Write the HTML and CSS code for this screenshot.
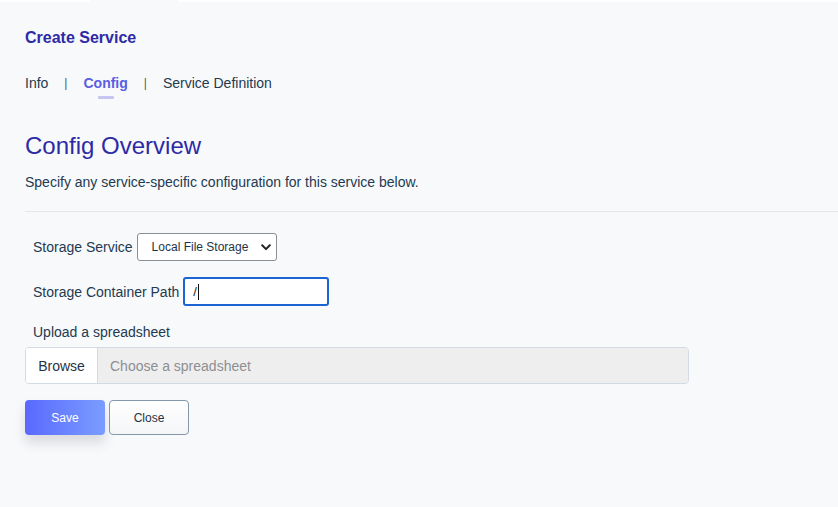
FILE: index.html
```html
<!DOCTYPE html>
<html>
<head>
<meta charset="utf-8">
<link rel="stylesheet" href="styles.css">
</head>
<body>
<div class="topstrip"><span class="ts-a"></span><span class="ts-gap"></span><span class="ts-b"></span></div>
<main class="page">
  <h1 class="title">Create Service</h1>
  <nav class="tabs">
    <span class="tab">Info</span>
    <span class="sep">|</span>
    <span class="tab active">Config<span class="bar"></span></span>
    <span class="sep">|</span>
    <span class="tab">Service Definition</span>
  </nav>
  <h2 class="heading">Config Overview</h2>
  <p class="desc">Specify any service-specific configuration for this service below.</p>
  <div class="rule"></div>
  <div class="row row-select">
    <label class="lbl">Storage Service</label>
    <div class="select">Local File Storage
      <svg class="chev" width="10" height="7" viewBox="0 0 10 7"><path d="M1.2 1.3 L5 5.1 L8.8 1.3" fill="none" stroke="#222" stroke-width="2" stroke-linecap="round" stroke-linejoin="round"/></svg>
    </div>
  </div>
  <div class="row row-input">
    <label class="lbl">Storage Container Path</label>
    <div class="textin"><span class="val">/</span><span class="caret"></span></div>
  </div>
  <div class="lbl upload">Upload a spreadsheet</div>
  <div class="filegroup">
    <span class="browse">Browse</span>
    <span class="fileph">Choose a spreadsheet</span>
  </div>
  <div class="actions">
    <button class="btn save">Save</button>
    <button class="btn close">Close</button>
  </div>
</main>
</body>
</html>
```
FILE: styles.css
```css
* { box-sizing: border-box; }
html, body { margin: 0; padding: 0; }
body {
  background: #f8f9fb;
  font-family: "Liberation Sans", Arial, sans-serif;
  color: #233a50;
  width: 838px;
  height: 507px;
  overflow: hidden;
}
.topstrip { display: flex; height: 2px; }
.ts-a { width: 90px; background: #fff; }
.ts-gap { width: 88px; }
.ts-b { flex: 1; background: #fff; }

.page { padding-left: 25px; }
.title {
  margin: 26px 0 0;
  font-size: 16px;
  line-height: 20px;
  font-weight: bold;
  color: #2d2aa6;
}
.tabs {
  display: flex;
  align-items: flex-start;
  gap: 16px;
  margin-top: 25px;
  font-size: 14px;
  line-height: 20px;
  height: 20px;
}
.tab { display: flex; flex-direction: column; align-items: center; }
.tab.active { color: #5a5ee4; font-weight: bold; }
.bar { width: 16px; height: 3px; background: #c5c6f2; margin-top: 3px; border-radius: 1px; }
.sep { color: #4a5a6a; font-size: 12px; }

.heading {
  margin: 39px 0 0;
  font-size: 24px;
  line-height: 28px;
  font-weight: normal;
  color: #2d2aa6;
}
.desc {
  margin: 12px 0 0;
  font-size: 14px;
  line-height: 20px;
}
.rule { margin-top: 19px; height: 1px; background: #e4e6ea; }

.row { display: flex; align-items: center; padding-left: 8px; gap: 4px; }
.row-select { margin-top: 21px; }
.row-input { margin-top: 16px; }
.lbl { font-size: 14px; line-height: 20px; }
.select {
  width: 140px;
  height: 28px;
  border: 1px solid #8a8f96;
  border-radius: 3px;
  background: #fff;
  font-size: 12px;
  color: #1f3346;
  display: flex;
  align-items: center;
  justify-content: space-between;
  padding: 0 5px 0 14px;
}
.chev { display: block; }
.textin {
  width: 146px;
  height: 29px;
  border: 2px solid #1a64d4;
  border-radius: 3px;
  background: #fff;
  display: flex;
  align-items: center;
  padding-left: 8px;
  font-size: 13px;
  color: #222;
}
.caret { width: 1px; height: 16px; background: #111; margin-left: 1px; }

.upload { margin-top: 16px; padding-left: 8px; }
.filegroup {
  margin-top: 5px;
  width: 664px;
  height: 37px;
  border: 1px solid #d3dae2;
  border-radius: 4px;
  display: flex;
  overflow: hidden;
  font-size: 14px;
}
.browse {
  width: 72px;
  background: #fff;
  border-right: 1px solid #d3dae2;
  display: flex;
  align-items: center;
  justify-content: center;
  color: #1f3346;
}
.fileph {
  flex: 1;
  background: #eeeeee;
  display: flex;
  align-items: center;
  padding-left: 12px;
  color: #8d8f92;
}

.actions { display: flex; gap: 4px; margin-top: 16px; }
.btn {
  width: 80px;
  height: 35px;
  font-family: "Liberation Sans", Arial, sans-serif;
  font-size: 12px;
  border-radius: 4px;
  cursor: pointer;
}
.save {
  border: none;
  color: #fff;
  background: linear-gradient(90deg, #5a69ff, #7a9dff);
  box-shadow: 0 8px 12px rgba(60, 60, 80, 0.16);
}
.close {
  border: 1px solid #8597aa;
  color: #1f3346;
  background: linear-gradient(180deg, #ffffff, #f4f5f7);
}
```
